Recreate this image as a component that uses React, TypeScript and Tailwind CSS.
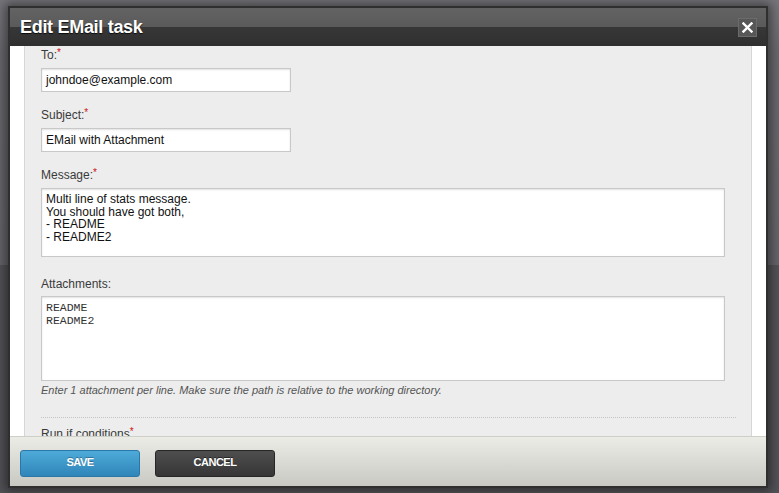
import React from 'react';

const Req = () => <span className="text-[10px] leading-none align-top text-[#cc1111]">*</span>;

const Label: React.FC<{ text: string; required?: boolean; className?: string }> = ({ text, required, className }) => (
  <div className={`h-[14px] text-[12px] leading-[14px] text-[#3a3a3a] ${className ?? ''}`}>
    {text}
    {required && <Req />}
  </div>
);

const TextInput: React.FC<{ value: string; className?: string }> = ({ value, className }) => (
  <div
    className={`h-[24px] w-[250px] border border-[#c8c8c8] bg-white pl-[4px] text-[12px] leading-[22px] text-[#111] shadow-[inset_0_1px_2px_rgba(0,0,0,0.12)] ${className ?? ''}`}
  >
    {value}
  </div>
);

export default function App() {
  return (
    <div className="relative w-[779px] h-[493px] overflow-hidden bg-[#67666b] font-['Liberation_Sans',Arial,sans-serif]">
      {/* dimmed page behind */}
      <div className="flex flex-col h-full">
        <div className="h-[265px] bg-[linear-gradient(to_bottom,#77767b,#69686d_20%,#656469)]" />
        <div className="flex-1 bg-[#535257]" />
      </div>

      {/* Dialog */}
      <div className="absolute left-[8px] top-[6px] w-[760px] h-[482px] flex flex-col border-2 border-[#2f2f2f] bg-white shadow-[0_0_10px_3px_rgba(0,0,0,0.45)]">
        {/* Header */}
        <div className="h-[38px] shrink-0 flex items-center justify-between pl-[10px] pr-[9px] bg-[linear-gradient(to_bottom,#636363_0%,#5a5a5a_50%,#373737_51%,#2f2f2f_100%)]">
          <span className="text-[18px] font-bold tracking-[-0.3px] text-white [text-shadow:0_1px_1px_rgba(0,0,0,0.8)]">
            Edit EMail task
          </span>
          <button className="w-[19px] h-[19px] flex items-center justify-center bg-[#575757] border border-[#6b6b6b]">
            <svg width="11" height="11" viewBox="0 0 11 11">
              <path d="M1.5 1.5 L9.5 9.5 M9.5 1.5 L1.5 9.5" stroke="#fff" strokeWidth="2.4" strokeLinecap="square" />
            </svg>
          </button>
        </div>

        {/* Body */}
        <div className="h-[390px] shrink-0 overflow-hidden bg-white px-[14px]">
          <div className="h-full border-x border-[#d6d6d6] bg-[#ededed] pl-[16px] pr-[15px] pt-[2px]">
            <Label text="To:" required />
            <TextInput value="johndoe@example.com" className="mt-[6px]" />

            <Label text="Subject:" required className="mt-[16px]" />
            <TextInput value="EMail with Attachment" className="mt-[6px]" />

            <Label text="Message:" required className="mt-[16px]" />
            <div className="mt-[6px] h-[69px] w-[684px] border border-[#c8c8c8] bg-white px-[4px] pt-[4px] text-[12px] leading-[12.5px] text-[#111] shadow-[inset_0_1px_2px_rgba(0,0,0,0.12)]">
              <div>Multi line of stats message.</div>
              <div>You should have got both,</div>
              <div>- README</div>
              <div>- README2</div>
            </div>

            <Label text="Attachments:" className="mt-[20px]" />
            <div className="mt-[5px] h-[85px] w-[684px] border border-[#c8c8c8] bg-white px-[4px] pt-[4px] font-['Liberation_Mono',monospace] text-[11.5px] leading-[13px] text-[#333] shadow-[inset_0_1px_2px_rgba(0,0,0,0.12)]">
              <div>README</div>
              <div>README2</div>
            </div>
            <div className="mt-[3px] h-[13px] text-[11px] leading-[13px] italic text-[#555]">
              Enter 1 attachment per line. Make sure the path is relative to the working directory.
            </div>

            <div className="mt-[20px] border-t border-dotted border-[#c4c4c4]" />
            <Label text="Run if conditions" required className="mt-[9px]" />
          </div>
        </div>

        {/* Footer */}
        <div className="h-[50px] shrink-0 flex items-start gap-[15px] pl-[10px] pt-[13px] border-t border-[#cfcfca] bg-[linear-gradient(to_bottom,#ecece7,#c9c9c3)]">
          <button className="w-[120px] h-[27px] rounded-[3px] border border-[#2a78a9] bg-[linear-gradient(to_bottom,#4eaad8,#2f86b9)] pb-[3px] text-[11px] font-bold tracking-[-0.5px] text-white [text-shadow:0_-1px_0_rgba(0,0,0,0.3)]">
            SAVE
          </button>
          <button className="w-[120px] h-[27px] rounded-[3px] border border-[#262626] bg-[linear-gradient(to_bottom,#4e4e4e,#363636)] pb-[3px] text-[11px] font-bold tracking-[-0.5px] text-white [text-shadow:0_-1px_0_rgba(0,0,0,0.5)]">
            CANCEL
          </button>
        </div>
      </div>
    </div>
  );
}
